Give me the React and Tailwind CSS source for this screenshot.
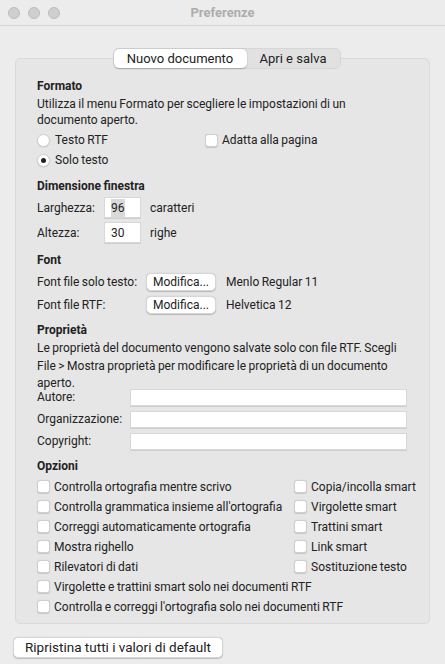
import React from 'react';

const Check = ({ label }) => (
  <div className="flex items-center h-5 whitespace-nowrap">
    <span className="shrink-0 w-[13px] h-[13px] rounded-[3px] bg-white border border-[#cfcfcf] shadow-[0_0.5px_1px_rgba(0,0,0,0.15)] mr-[4px]" />
    <span>{label}</span>
  </div>
);

const Radio = ({ label, on }) => (
  <div className="flex items-center h-5 whitespace-nowrap">
    <span className="shrink-0 w-[13px] h-[13px] rounded-full bg-white border border-[#cfcfcf] shadow-[0_0.5px_1px_rgba(0,0,0,0.15)] mr-[5px] flex items-center justify-center">
      {on && <span className="w-[5px] h-[5px] rounded-full bg-[#222]" />}
    </span>
    <span>{label}</span>
  </div>
);

const Btn = ({ children, className = '' }) => (
  <span className={`shrink-0 whitespace-nowrap bg-white rounded-[5px] border border-[#d6d6d6] shadow-[0_0.5px_1px_rgba(0,0,0,0.2)] flex items-center justify-center ${className}`}>
    {children}
  </span>
);

const Field = ({ value, className = '' }) => (
  <span className={`bg-white border border-[#d8d8d8] shadow-[0_0.5px_0.5px_rgba(0,0,0,0.1)] flex items-center px-[6px] ${className}`}>
    {value}
  </span>
);

export default function App() {
  const left = [
    'Controlla ortografia mentre scrivo',
    'Controlla grammatica insieme all\'ortografia',
    'Correggi automaticamente ortografia',
    'Mostra righello',
    'Rilevatori di dati',
  ];
  const right = ['Copia/incolla smart', 'Virgolette smart', 'Trattini smart', 'Link smart', 'Sostituzione testo'];

  return (
    <div className="w-[445px] h-[664px] bg-[#ececec] text-[12px] [word-spacing:-0.5px] text-[#222] font-['Roboto','Liberation_Sans',sans-serif] overflow-hidden whitespace-nowrap">
      {/* title bar */}
      <div className="h-[26px] border-b border-[#d4d4d4] flex items-center relative">
        <div className="flex gap-[8px] pl-[8px]">
          <span className="w-[12px] h-[12px] rounded-full bg-[#cfcfcf] border border-[#bcbcbc]" />
          <span className="w-[12px] h-[12px] rounded-full bg-[#cfcfcf] border border-[#bcbcbc]" />
          <span className="w-[12px] h-[12px] rounded-full bg-[#cfcfcf] border border-[#bcbcbc]" />
        </div>
        <div className="absolute inset-0 flex items-center justify-center font-bold text-[13px] text-[#adadad] [word-spacing:0]">Preferenze</div>
      </div>

      <div className="px-[15px] pt-[22px] relative">
        {/* tabs */}
        <div className="flex justify-center relative z-10 h-[21px] pl-[8px]">
          <div className="flex bg-[#e1e1e1] rounded-[6px] border border-[#d6d6d6] text-[13px] [word-spacing:0]">
            <span className="bg-white rounded-[5px] shadow-[0_0.5px_1.5px_rgba(0,0,0,0.25)] w-[133px] flex items-center justify-center">Nuovo documento</span>
            <span className="w-[93px] flex items-center justify-center">Apri e salva</span>
          </div>
        </div>

        {/* group box */}
        <div className="-mt-[11px] bg-[#e6e6e6] border border-[#dadada] rounded-[5px] h-[566px] pl-[21px] pr-[22px] pt-[18px]">
          <div className="font-bold leading-[18px]">Formato</div>
          <div className="leading-[16px] mt-[1px]">Utilizza il menu Formato per scegliere le impostazioni di un<br />documento aperto.</div>
          <div className="flex mt-[2px]">
            <div className="w-[168px]">
              <Radio label="Testo RTF" />
              <Radio label="Solo testo" on />
            </div>
            <Check label="Adatta alla pagina" />
          </div>

          <div className="font-bold leading-[18px] mt-[7px]">Dimensione finestra</div>
          <div className="flex items-center mt-[2px] h-[21px]">
            <span className="w-[67px] shrink-0">Larghezza:</span>
            <Field value={<span className="bg-[#d9d9d9]">96</span>} className="w-[37px] h-[21px]" />
            <span className="ml-[9px]">caratteri</span>
          </div>
          <div className="flex items-center mt-[4px] h-[21px]">
            <span className="w-[67px] shrink-0">Altezza:</span>
            <Field value="30" className="w-[37px] h-[21px]" />
            <span className="ml-[9px]">righe</span>
          </div>

          <div className="font-bold leading-[18px] mt-[8px]">Font</div>
          <div className="flex items-center mt-[4px] h-[18px]">
            <span className="w-[109px] shrink-0">Font file solo testo:</span>
            <Btn className="w-[70px] h-[18px]">Modifica...</Btn>
            <span className="ml-[10px]">Menlo Regular 11</span>
          </div>
          <div className="flex items-center mt-[5px] h-[18px]">
            <span className="w-[109px] shrink-0">Font file RTF:</span>
            <Btn className="w-[70px] h-[18px]">Modifica...</Btn>
            <span className="ml-[10px]">Helvetica 12</span>
          </div>

          <div className="font-bold leading-[18px] mt-[7px]">Proprietà</div>
          <div className="leading-[17.5px] mt-[1px]">Le proprietà del documento vengono salvate solo con file RTF. Scegli<br />File &gt; Mostra proprietà per modificare le proprietà di un documento<br />aperto.</div>
          <div className="flex flex-col gap-[5px] -mt-[4px]">
            {['Autore:', 'Organizzazione:', 'Copyright:'].map((l) => (
              <div key={l} className="flex items-center h-[17px]">
                <span className="w-[93px] shrink-0">{l}</span>
                <Field value="" className="flex-1 h-[17px]" />
              </div>
            ))}
          </div>

          <div className="font-bold leading-[18px] mt-[7px]">Opzioni</div>
          <div className="flex mt-[2px]">
            <div className="w-[257px] shrink-0">
              {left.map((l) => <Check key={l} label={l} />)}
            </div>
            <div>
              {right.map((l) => <Check key={l} label={l} />)}
            </div>
          </div>
          <Check label="Virgolette e trattini smart solo nei documenti RTF" />
          <Check label="Controlla e correggi l'ortografia solo nei documenti RTF" />
        </div>

        <div className="flex mt-[13px] -ml-[2px]">
          <Btn className="h-[21px] px-[11px] text-[13.5px] [word-spacing:0]">Ripristina tutti i valori di default</Btn>
        </div>
      </div>
    </div>
  );
}
